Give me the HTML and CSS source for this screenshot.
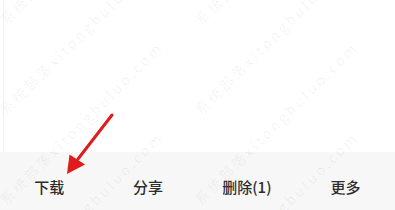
FILE: index.html
```html
<!DOCTYPE html>
<html lang="zh-CN">
<head>
<meta charset="utf-8">
<title>下载</title>
<link rel="stylesheet" href="styles.css">
</head>
<body>
<div class="page">
  <div class="content"></div>
  <nav class="toolbar">
    <div class="tool">下载</div>
    <div class="tool">分享</div>
    <div class="tool">删除(1)</div>
    <div class="tool">更多</div>
  </nav>
</div>
<div class="watermarks" aria-hidden="true">
  <span class="wm wm-c0 wm-r0">系统部落xitongbuluo.com</span>
  <span class="wm wm-c0 wm-r1">系统部落xitongbuluo.com</span>
  <span class="wm wm-c0 wm-r2">系统部落xitongbuluo.com</span>
  <span class="wm wm-c0 wm-r3">系统部落xitongbuluo.com</span>
  <span class="wm wm-c1 wm-r0">系统部落xitongbuluo.com</span>
  <span class="wm wm-c1 wm-r1">系统部落xitongbuluo.com</span>
  <span class="wm wm-c1 wm-r2">系统部落xitongbuluo.com</span>
  <span class="wm wm-c1 wm-r3">系统部落xitongbuluo.com</span>
</div>
<svg class="arrow" width="395" height="210" viewBox="0 0 395 210" aria-hidden="true">
  <line x1="112" y1="115" x2="78" y2="159" stroke="#e01b1b" stroke-width="3" stroke-linecap="round"/>
  <polygon points="67,174 69.5,154.5 85,164.5" fill="#e01b1b"/>
</svg>
</body>
</html>
```
FILE: styles.css
```css
html, body {
  margin: 0;
  padding: 0;
}
body {
  width: 395px;
  height: 210px;
  overflow: hidden;
  position: relative;
  background: #ffffff;
  font-family: "Noto Sans CJK SC", "Noto Sans", sans-serif;
}
.page {
  display: flex;
  flex-direction: column;
  height: 210px;
}
.content {
  height: 152px;
  margin-left: 3px;
  border-left: 1px solid #f4f4f4;
  background: #ffffff;
}
.toolbar {
  flex: 1;
  display: grid;
  grid-template-columns: repeat(4, 1fr);
  align-items: start;
  padding-top: 25px;
  background: #f7f7f7;
}
.tool {
  text-align: center;
  font-size: 15px;
  line-height: 20px;
  font-weight: 500;
  color: #2e2e2e;
}
.watermarks {
  position: absolute;
  inset: 0;
  overflow: hidden;
  pointer-events: none;
}
.wm {
  position: absolute;
  white-space: nowrap;
  font-size: 14px;
  line-height: 14px;
  letter-spacing: 3px;
  color: rgba(0, 0, 0, 0.06);
  transform-origin: 0 100%;
  transform: rotate(-45deg);
}
.wm-c0 { left: 7px; }
.wm-c1 { left: 202px; }
.wm-r0 { top: 13px; }
.wm-r1 { top: 103px; }
.wm-r2 { top: 193px; }
.wm-r3 { top: 283px; }
.arrow {
  position: absolute;
  left: 0;
  top: 0;
  pointer-events: none;
}
```
